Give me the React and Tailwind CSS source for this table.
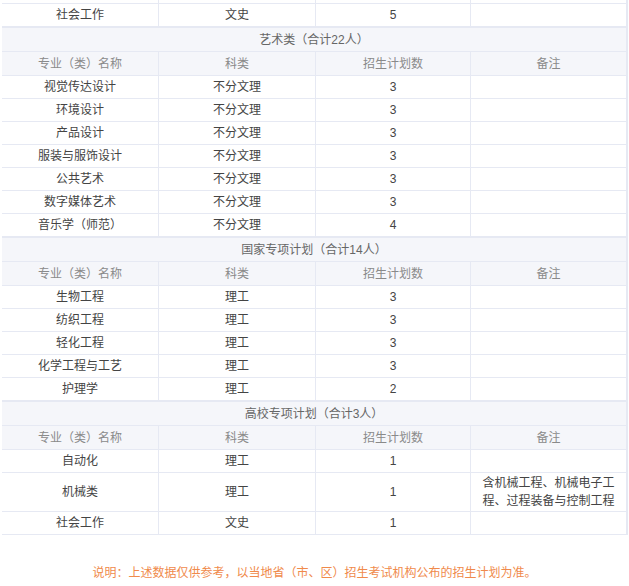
const grid = "grid grid-cols-[157px_157px_155px_157px]";
const line = "border-[#e6e9f3]";

const sections = [
  {
    title: "艺术类（合计22人）",
    rows: [
      ["视觉传达设计", "不分文理", "3", ""],
      ["环境设计", "不分文理", "3", ""],
      ["产品设计", "不分文理", "3", ""],
      ["服装与服饰设计", "不分文理", "3", ""],
      ["公共艺术", "不分文理", "3", ""],
      ["数字媒体艺术", "不分文理", "3", ""],
      ["音乐学（师范）", "不分文理", "4", ""],
    ],
  },
  {
    title: "国家专项计划（合计14人）",
    rows: [
      ["生物工程", "理工", "3", ""],
      ["纺织工程", "理工", "3", ""],
      ["轻化工程", "理工", "3", ""],
      ["化学工程与工艺", "理工", "3", ""],
      ["护理学", "理工", "2", ""],
    ],
  },
  {
    title: "高校专项计划（合计3人）",
    rows: [
      ["自动化", "理工", "1", ""],
      ["机械类", "理工", "1", "含机械工程、机械电子工程、过程装备与控制工程"],
      ["社会工作", "文史", "1", ""],
    ],
  },
];

const headers = ["专业（类）名称", "科类", "招生计划数", "备注"];

const Row = ({ cells, tall, head }) => (
  <div className={`${grid} border-b ${line} ${head ? "bg-[#f5f6fa] text-[#8a8a8a]" : "bg-white text-[#444]"}`}>
    {cells.map((c, i) => (
      <div
        key={i}
        className={`flex items-center justify-center text-center ${tall ? "h-[38px]" : head ? "h-[23px]" : "h-[22px]"} ${
          i === 3 ? `border-r-2 px-[6px] leading-[18px]` : "border-r"
        } ${line}`}
      >
        {c}
      </div>
    ))}
  </div>
);

const Section = ({ title, rows }) => (
  <>
    <div className={`h-[25px] flex items-center justify-center bg-[#f5f6fa] text-[#666] border-t border-b border-r-2 ${line}`}>
      {title}
    </div>
    <Row cells={headers} head />
    {rows.map((r, i) => (
      <Row key={i} cells={r} tall={!!r[3]} />
    ))}
  </>
);

export default function App() {
  return (
    <div className="w-[629px] h-[586px] bg-white overflow-hidden text-[12px] font-['Liberation_Sans','Noto_Sans_CJK_SC',sans-serif]">
      <div className="ml-[2px] w-[626px]">
        <div className={`${grid} border-b ${line}`}>
          {[0, 1, 2, 3].map((i) => (
            <div key={i} className={`h-[3px] ${i === 3 ? "border-r-2" : "border-r"} ${line}`} />
          ))}
        </div>
        <Row cells={["社会工作", "文史", "5", ""]} />
        {sections.map((s, i) => (
          <Section key={i} title={s.title} rows={s.rows} />
        ))}
      </div>
      <p className="mt-[29px] text-center text-[12px] text-[#f08a4b]">
        说明：上述数据仅供参考，以当地省（市、区）招生考试机构公布的招生计划为准。
      </p>
    </div>
  );
}
